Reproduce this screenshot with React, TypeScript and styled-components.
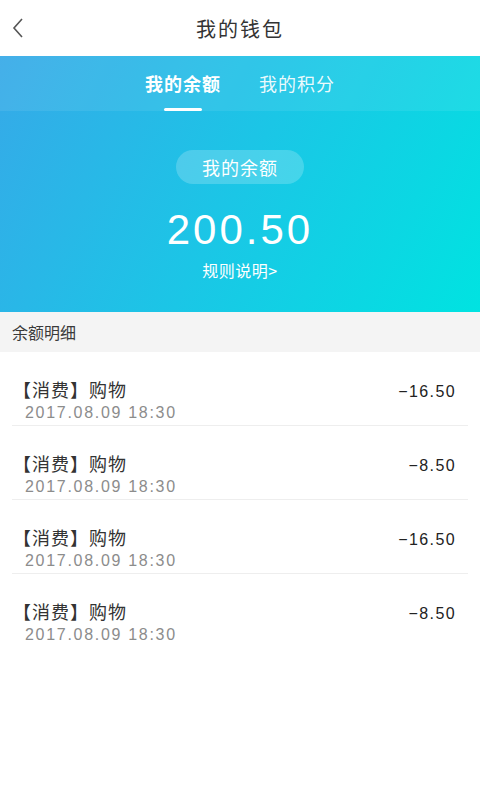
import React from 'react'
import styled, { createGlobalStyle } from 'styled-components'

const FONT = `"Noto Sans CJK SC", "Noto Sans", "Liberation Sans", sans-serif`
const LATIN = `"Liberation Sans", "Noto Sans", sans-serif`

const GlobalStyle = createGlobalStyle`
  html, body {
    margin: 0;
    padding: 0;
    background: #ffffff;
    font-family: ${FONT};
  }
`

const Page = styled.div`
  width: 480px;
  min-height: 800px;
  background: #ffffff;
`

const Header = styled.div`
  display: grid;
  grid-template-columns: 48px 1fr 48px;
  align-items: center;
  height: 56px;
`

const BackButton = styled.div`
  display: flex;
  align-items: center;
  padding-left: 11px;
  height: 56px;
`

const Title = styled.div`
  text-align: center;
  font-size: 20px;
  color: #333333;
  letter-spacing: 2px;
`

const Hero = styled.div`
  background: linear-gradient(118deg, #36a9e8 0%, #1bc6e6 50%, #00e3e1 100%);
  height: 256px;
  display: flex;
  flex-direction: column;
  align-items: center;
`

const Tabs = styled.div`
  align-self: stretch;
  height: 55px;
  display: flex;
  justify-content: center;
  gap: 38px;
  background: rgba(255, 255, 255, 0.08);
`

const Tab = styled.div<{ $active?: boolean }>`
  position: relative;
  display: flex;
  align-items: center;
  padding-bottom: 2px;
  font-size: 18px;
  letter-spacing: 1px;
  color: ${(p) => (p.$active ? '#ffffff' : 'rgba(255,255,255,0.92)')};
  font-weight: ${(p) => (p.$active ? 700 : 400)};

  &::after {
    content: '';
    display: ${(p) => (p.$active ? 'block' : 'none')};
    position: absolute;
    left: 50%;
    bottom: 0;
    width: 38px;
    height: 3px;
    border-radius: 2px;
    margin-left: -19px;
    background: #ffffff;
  }
`

const Pill = styled.div`
  margin-top: 39px;
  height: 34px;
  padding: 0 26px;
  border-radius: 17px;
  background: rgba(255, 255, 255, 0.2);
  color: #ffffff;
  font-size: 18px;
  letter-spacing: 1px;
  display: flex;
  align-items: center;
`

const Amount = styled.div`
  margin-top: 22px;
  font-family: ${LATIN};
  font-size: 42px;
  line-height: 48px;
  letter-spacing: 3px;
  color: #ffffff;
`

const Rules = styled.div`
  margin-top: 4px;
  font-size: 16px;
  letter-spacing: 0.5px;
  color: #ffffff;
`

const SectionBar = styled.div`
  height: 40px;
  background: #f4f4f4;
  display: flex;
  align-items: center;
  padding-left: 12px;
  font-size: 16px;
  color: #3a3a3a;
`

const List = styled.div`
  padding: 0 12px;
`

const Row = styled.div<{ $last?: boolean }>`
  height: 74px;
  box-sizing: border-box;
  display: grid;
  grid-template-columns: 1fr auto;
  grid-template-rows: 24px 24px;
  align-content: start;
  padding-top: 25px;
  border-bottom: ${(p) => (p.$last ? 'none' : '1px solid #eeeeee')};
`

const RowTitle = styled.div`
  font-size: 18px;
  line-height: 24px;
  letter-spacing: 1px;
  color: #333333;
  margin-left: 1px;
`

const RowDate = styled.div`
  grid-column: 1;
  font-family: ${LATIN};
  font-size: 16px;
  line-height: 24px;
  letter-spacing: 1.7px;
  color: #8c8c8c;
  padding-left: 13px;
`

const RowAmount = styled.div`
  grid-column: 2;
  grid-row: 1;
  padding-top: 3px;
  padding-right: 12px;
  font-family: ${LATIN};
  font-size: 16px;
  line-height: 24px;
  letter-spacing: 1.4px;
  color: #222222;
`

const records = [
  { title: '【消费】购物', date: '2017.08.09 18:30', amount: '−16.50' },
  { title: '【消费】购物', date: '2017.08.09 18:30', amount: '−8.50' },
  { title: '【消费】购物', date: '2017.08.09 18:30', amount: '−16.50' },
  { title: '【消费】购物', date: '2017.08.09 18:30', amount: '−8.50' },
]

export default function App() {
  return (
    <Page>
      <GlobalStyle />
      <Header>
        <BackButton>
          <svg width="14" height="22" viewBox="0 0 14 22" fill="none">
            <path d="M11 2 L3 11 L11 20" stroke="#555555" strokeWidth="1.6" strokeLinejoin="miter" />
          </svg>
        </BackButton>
        <Title>我的钱包</Title>
        <div />
      </Header>
      <Hero>
        <Tabs>
          <Tab $active>我的余额</Tab>
          <Tab>我的积分</Tab>
        </Tabs>
        <Pill>我的余额</Pill>
        <Amount>200.50</Amount>
        <Rules>规则说明&gt;</Rules>
      </Hero>
      <SectionBar>余额明细</SectionBar>
      <List>
        {records.map((r, i) => (
          <Row key={i} $last={i === records.length - 1}>
            <RowTitle>{r.title}</RowTitle>
            <RowAmount>{r.amount}</RowAmount>
            <RowDate>{r.date}</RowDate>
          </Row>
        ))}
      </List>
    </Page>
  )
}
